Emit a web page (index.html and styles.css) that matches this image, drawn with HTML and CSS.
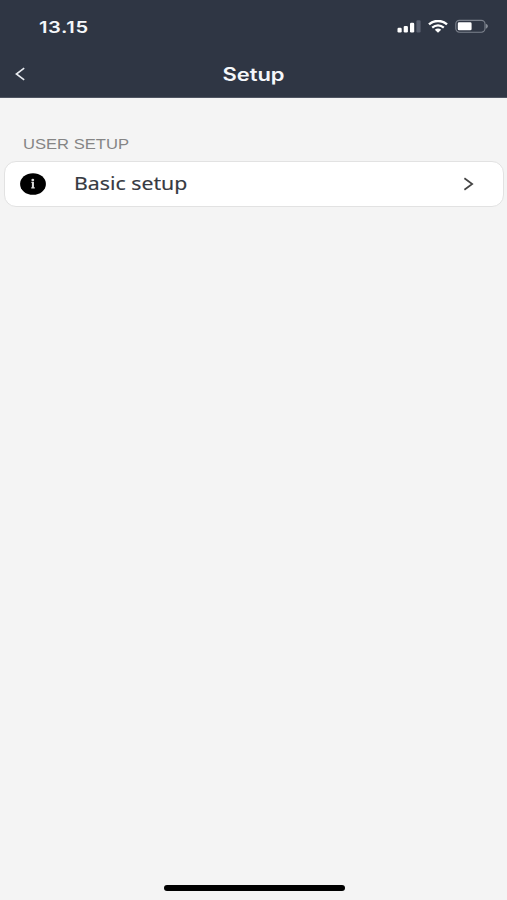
FILE: index.html
```html
<!DOCTYPE html>
<html lang="en">
<head>
    <meta charset="UTF-8">
    <meta name="viewport" content="width=device-width, initial-scale=1.0">
    <title>Setup</title>
    <link rel="stylesheet" href="styles.css">
</head>
<body>
    <header>
        <div class="status-bar">
            <span class="time">13.15</span>
            <div class="status-icons">
                <svg class="signal" width="24" height="14" viewBox="0 0 24 14">
                    <rect x="0.5" y="8.8" width="4.2" height="4.6" rx="1.2" fill="#fff"/>
                    <rect x="6.7" y="6.9" width="4.2" height="6.5" rx="1.2" fill="#fff"/>
                    <rect x="13" y="3.7" width="4.2" height="9.7" rx="1.2" fill="#fff"/>
                    <rect x="19.4" y="1.2" width="4.2" height="12.2" rx="1.2" fill="#596070"/>
                </svg>
                <svg class="wifi" width="20" height="13" viewBox="0 0 20 13">
                    <path d="M1 4.4C6 -0.2 14 -0.2 19 4.4" fill="none" stroke="#fff" stroke-width="2.4"/>
                    <path d="M4.2 7.6C7.6 4.6 12.4 4.6 15.8 7.6" fill="none" stroke="#fff" stroke-width="2.2"/>
                    <path d="M6.8 9.7C8.7 8.1 11.3 8.1 13.2 9.7L10 12.7Z" fill="#fff"/>
                </svg>
                <svg class="battery" width="34" height="14" viewBox="0 0 34 14">
                    <rect x="0.8" y="1.4" width="29.2" height="11.8" rx="3.6" fill="none" stroke="#7c828d" stroke-width="1.1"/>
                    <rect x="2.8" y="3.3" width="13.8" height="8" rx="1.4" fill="#fff"/>
                    <path d="M30.8 4.8C33.6 5.8 33.6 8.6 30.8 9.8Z" fill="#858b95"/>
                </svg>
            </div>
        </div>
        <nav class="nav-bar">
            <a href="#" class="back" aria-label="Back">
                <svg width="10" height="14" viewBox="0 0 10 14">
                    <path d="M9.2 1.2L1.4 7L9.2 12.8" fill="none" stroke="#e8ebf0" stroke-width="1.6"/>
                </svg>
            </a>
            <h1>Setup</h1>
        </nav>
    </header>

    <main>
        <h2>USER SETUP</h2>
        <a href="#" class="row">
            <svg class="info" width="26" height="22" viewBox="0 0 26 22">
                <ellipse cx="13" cy="11" rx="12.9" ry="10.8" fill="#000"/>
                <ellipse cx="12.8" cy="7" rx="1.4" ry="1.2" fill="#ddd"/>
                <path d="M11.4 9.4H13.2V14.6M11.2 14.8H14.8" fill="none" stroke="#ddd" stroke-width="1.3"/>
                <path d="M12.8 9V15" stroke="#ddd" stroke-width="1.8"/>
            </svg>
            <span class="label">Basic setup</span>
            <svg class="chevron" width="11" height="14" viewBox="0 0 11 14">
                <path d="M1.4 1.2L9.2 7L1.4 12.8" fill="none" stroke="#444" stroke-width="1.7"/>
            </svg>
        </a>
    </main>

    <div class="home-indicator"></div>
</body>
</html>
```
FILE: styles.css
```css
* {
    box-sizing: border-box;
}

body {
    font-family: Inter, "Liberation Sans", sans-serif;
    background-color: #f4f4f4;
    margin: 0;
    height: 100vh;
    display: flex;
    flex-direction: column;
    overflow: hidden;
}

header {
    background-color: #2f3644;
    height: 98px;
    color: #f5f7fa;
    border-bottom: 1px solid #4f5562;
}

.status-bar {
    height: 52px;
    padding: 0 18px 0 39px;
    display: flex;
    align-items: center;
    justify-content: space-between;
}

.time {
    font-size: 16.5px;
    font-weight: 600;
    line-height: 20px;
    letter-spacing: 0.5px;
    padding-top: 1px;
    transform: scaleX(1.22);
    transform-origin: left;
}

.status-icons {
    display: flex;
    align-items: center;
}

.wifi {
    margin-left: 7px;
}

.battery {
    margin-left: 7px;
}

.nav-bar {
    height: 44px;
    display: grid;
    grid-template-columns: 60px 1fr 60px;
    align-items: center;
}

.back {
    display: flex;
    padding-left: 15px;
}

h1 {
    margin: 0;
    padding-top: 2px;
    justify-self: center;
    font-size: 18px;
    font-weight: 600;
    line-height: 24px;
    transform: scaleX(1.22);
}

main {
    flex: 1;
    padding: 36px 3px 0 4px;
}

h2 {
    width: fit-content;
    margin: 0 0 7px 19px;
    font-family: "Liberation Sans", sans-serif;
    font-size: 15.5px;
    font-weight: 400;
    line-height: 20px;
    color: #858585;
    transform: scaleX(1.07);
    transform-origin: left;
}

.row {
    display: flex;
    align-items: center;
    height: 46px;
    padding: 0 29px 0 15px;
    background-color: #fff;
    border: 1px solid #e2e2e2;
    border-radius: 12px;
    color: #363a42;
    text-decoration: none;
}

.label {
    margin-left: 27.5px;
    padding-bottom: 2px;
    font-family: "Noto Sans", sans-serif;
    font-size: 18.5px;
    line-height: 24px;
    -webkit-text-stroke: 0.15px #363a42;
    transform: scaleX(1.15);
    transform-origin: left;
}

.chevron {
    margin-left: auto;
}

.home-indicator {
    width: 181px;
    height: 6px;
    margin: 0 auto 9px 164px;
    border-radius: 3px;
    background-color: #000;
}
```
